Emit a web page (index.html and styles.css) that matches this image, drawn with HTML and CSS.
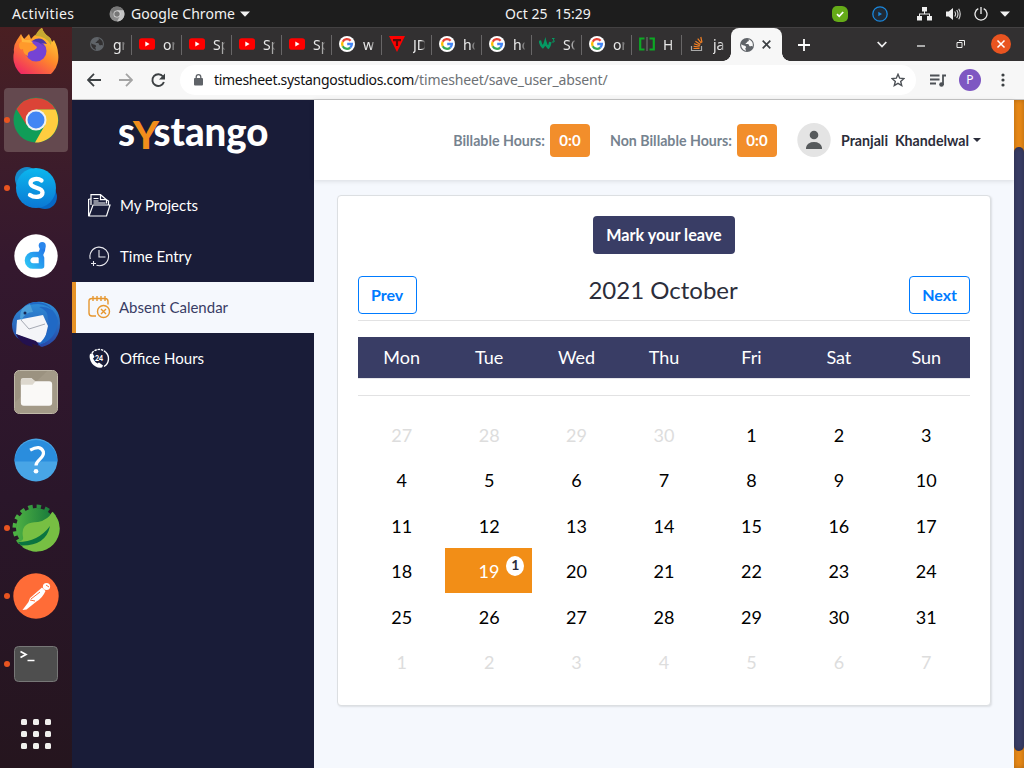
FILE: index.html
```html
<!DOCTYPE html>
<html lang="en">
<head>
<meta charset="utf-8">
<title>Timesheet</title>
<link rel="stylesheet" href="styles.css">
</head>
<body>
<svg width="0" height="0" class="defs">
  <defs>
    <linearGradient id="ff" x1="0.8" y1="0" x2="0.2" y2="1"><stop offset="0" stop-color="#ffd93b"/><stop offset=".45" stop-color="#ff8a2a"/><stop offset="1" stop-color="#ee1a6b"/></linearGradient>
    <linearGradient id="sk" x1="0" y1="0" x2="0" y2="1"><stop offset="0" stop-color="#0cb7ee"/><stop offset="1" stop-color="#0b78d4"/></linearGradient>
    <linearGradient id="tb" x1="0" y1="0" x2="0" y2="1"><stop offset="0" stop-color="#2e8fd9"/><stop offset="1" stop-color="#2746a5"/></linearGradient>
    <linearGradient id="sp" x1="0" y1="0" x2="1" y2="0"><stop offset="0" stop-color="#4db043"/><stop offset="1" stop-color="#12733a"/></linearGradient>
    <linearGradient id="dl" x1="0" y1="1" x2="1" y2="0"><stop offset="0" stop-color="#2cc1f4"/><stop offset="1" stop-color="#2277e8"/></linearGradient>
    <symbol id="google" viewBox="0 0 16 16"><circle cx="8" cy="8" r="8" fill="#fff"/><g fill="none" stroke-width="2.3"><path d="M11.6 4.7A4.9 4.9 0 0 0 3.7 5.7" stroke="#ea4335"/><path d="M3.7 5.7a4.9 4.9 0 0 0 0 4.6" stroke="#fbbc05"/><path d="M3.7 10.3a4.9 4.9 0 0 0 7.5 1.3" stroke="#34a853"/><path d="M11.2 11.6A4.900 4.900 0 0 0 12.900 8H8.200" stroke="#4285f4"/></g></symbol>
    <symbol id="youtube" viewBox="0 0 16 16"><rect y="2.300" width="16" height="11.400" rx="2.800" fill="#f00"/><path d="M6.300 5.500v5L10.600 8z" fill="#fff"/></symbol>
    <symbol id="globe" viewBox="0 0 16 16"><circle cx="8" cy="8" r="7" fill="currentColor"/><path d="M9.600 2.300c.8 1.500-.3 2.200-1.400 2.400-.2 1.300-1.600 1.100-1.600 2.300 1.800-.1 3.500-.2 3.500 1.300 0 1 .9 1.200 1.800.9.9-.3 1.400.1 1.800.4.800-3.300-.9-6.200-4.100-7.300zM2.200 7.200c1.600 1.500 3.600 1 4.700 2.300.8 1.100-.8 1.300-.6 2.300.1.900.9.900.7 1.900C4.200 13.300 2 10.600 2.200 7.200z" fill="var(--land)"/></symbol>
  </defs>
</svg>
<div class="screen">
  <header class="topbar">
    <div class="top-left">
      <span class="activities">Activities</span>
      <svg class="mini-chrome" viewBox="0 0 16 16"><circle cx="8" cy="8" r="7.500" fill="#8c8c8c"/><path d="M8 4.300h6.500A7.500 7.500 0 0 1 8 15.500L11.200 9.800z" fill="#c5c5c5"/><path d="M1.600 4A7.500 7.500 0 0 1 14.400 4H8L4.700 9.500z" fill="#777"/><circle cx="8" cy="8" r="3.500" fill="#ddd"/><circle cx="8" cy="8" r="2.700" fill="#777"/></svg>
      <span class="appname">Google Chrome</span>
      <svg class="caret" viewBox="0 0 10 6"><path d="M0 .5h10L5 5.800z" fill="#f2f2f2"/></svg>
    </div>
    <div class="clock">Oct 25&nbsp; 15:29</div>
    <div class="top-right">
      <svg width="16" height="16" viewBox="0 0 16 16"><path d="M5 0h5a6 6 0 0 1 6 6v5a5 5 0 0 1-5 5H6a6 6 0 0 1-6-6V5a5 5 0 0 1 5-5z" fill="#65ab18"/><path d="M5 8.200l2.200 2.100L11.200 6" fill="none" stroke="#fff" stroke-width="1.800"/></svg>
      <svg class="g24" width="16" height="16" viewBox="0 0 16 16"><circle cx="8" cy="8" r="7.200" fill="#1f2a36" stroke="#1b87dc" stroke-width="1.300"/><path d="M6.300 5.700v4.600L10 8z" fill="#1b87dc"/></svg>
      <svg class="g29" width="15" height="14" viewBox="0 0 15 14"><path d="M5 0h5v4.500H8V6.500h5V9h2v4.500h-5V9h2V7.500H3V9h2v4.500H0V9h2V6.500h5v-2H5z" fill="#eee"/></svg>
      <svg class="g14" width="15" height="14" viewBox="0 0 15 14"><path d="M0 4.500h2.700L7 1v12L2.700 9.500H0z" fill="#eee"/><path d="M8.700 4.500q1.800 2.500 0 5M10.700 3q2.600 4 0 8M12.700 1.700q3 5.300 0 10.600" fill="none" stroke="#ddd" stroke-width="1.100"/></svg>
      <svg class="g13" width="14" height="14" viewBox="0 0 14 14"><path d="M4.300 1.700a6 6 0 1 0 5.400 0M7 0v7" fill="none" stroke="#eee" stroke-width="1.300"/></svg>
      <svg class="g12" width="10" height="6" viewBox="0 0 10 6"><path d="M0 .5h10L5 5.800z" fill="#f2f2f2"/></svg>
    </div>
  </header>
  <div class="desktop">
    <nav class="dock">
      <div class="dock-item first"><svg width="46" height="46" viewBox="0 0 46 46"><path d="M4 12l4-6 3 5 5-5 2 5q3-4 6-5 2-5 5-6 2 6 7 9 2 1 3 5l2-2q4 8 4 13A22.500 22.500 0 1 1 1 24Q0 18 4 12z" fill="url(#ff)"/><path d="M22 8q3-6 7-8 2 6 7 9 3 2 2 8-5-9-16-9z" fill="#c8a932"/><circle cx="23" cy="23" r="10.500" fill="#7543d4"/><path d="M6 16q4-6 10-4l8 7q-1 3-6 4-4 1-3 5-5-2-5-7-4 2-4-5z" fill="#ff9a2b"/><path d="M8 8l4 4h5l3 3-11-1z" fill="#ffb53c"/><path d="M19 13q9-6 15 3l-6-1 4 4q-6-6-13-6z" fill="#4b37a7"/></svg></div>
      <div class="dock-item active running"><svg width="46" height="46" viewBox="0 0 46 46"><circle cx="23" cy="23" r="22.500" fill="#109d58"/><path d="M3.500 12A22.500 22.500 0 0 1 42.500 12.500H23L13.500 28z" fill="#db4437"/><path d="M23 12.500h19.500A22.500 22.500 0 0 1 22 45.500L32 28z" fill="#ffcd40"/><circle cx="23" cy="23" r="10.500" fill="#f1f1f1"/><circle cx="23" cy="23" r="8.500" fill="#4285f4"/></svg></div>
      <div class="dock-item running"><svg width="42" height="42" viewBox="0 0 42 42"><circle cx="12" cy="12" r="12" fill="#168bcb"/><circle cx="30" cy="30" r="12" fill="#0768c5"/><circle cx="21" cy="21" r="20" fill="url(#sk)"/><path d="M26.500 13.500C23 11 15.500 11.500 15.500 16c0 6 12 3.500 12 9.500 0 5-8 5.500-12.500 2.500" fill="none" stroke="#fff" stroke-width="4.300" stroke-linecap="round"/></svg></div>
      <div class="dock-item"><svg width="44" height="44" viewBox="0 0 44 44"><circle cx="22" cy="22" r="21.700" fill="#fff"/><path d="M27.500 20.500H20a6 6 0 0 0-6.500 6 5.500 5.500 0 0 0 6 5.500h8v-8q-2-3 0-6 1.500-2 1-6" fill="none" stroke="url(#dl)" stroke-width="5.600" stroke-linejoin="round"/><circle cx="28.200" cy="11.500" r="3.500" fill="#2a86ec"/></svg></div>
      <div class="dock-item"><svg width="48" height="48" viewBox="0 0 48 48"><path d="M8 10Q18 0 31 2q17 4 17 21 0 19-18 24l-5-2-9-3Q0 40 0 24q1-9 8-14z" fill="url(#tb)"/><path d="M5 20l26-5 5 11-4 17-9-1L4 34z" fill="#f4f5f8"/><path d="M9 20l8 9 16-5" fill="none" stroke="#a5a9b3"/><path d="M4 34l20 7 4 5-8-2 1 3Q8 45 4 34z" fill="#23114f"/><path d="M8 17q2-14 15-15 13 0 17 8-7-4-13-3 9 3 9 12 3 14-10 26 18-4 20-24-4-16-20-17Q9 4 8 17z" fill="#2069c5"/><path d="M8 18Q8 6 18 4l3 8q-8 0-11 8z" fill="#4b9ed8"/><circle cx="13" cy="13" r="1.500" fill="#162756"/></svg></div>
      <div class="dock-item"><svg width="44" height="44" viewBox="0 0 45 45"><rect x=".5" y=".5" width="44" height="44" rx="5" fill="#9b9280" stroke="#c4bcab"/><path d="M1 33L34 1h7q3 0 3 4v36q0 3-4 3H5q-4 0-4-4z" fill="#a39a88"/><path d="M7 11q0-2.500 2.500-2.500H18l3 3h15q3 0 3 3v19q0 3-3 3H10q-3 0-3-3z" fill="#faf9f7"/><path d="M7 15V11q0-2.500 2.500-2.500H18l4 3-3 3.500z" fill="#ddd8ce"/></svg></div>
      <div class="dock-item"><svg width="44" height="44" viewBox="0 0 45 45"><circle cx="22.500" cy="22.500" r="22" fill="#48a5e6"/><path d="M.5 24a22 22 0 1 1 44 0z" fill="#2a8ddd"/><path d="M16.500 12.500Q27 6.500 30 14c1.500 7-7.500 8-7.500 14" fill="none" stroke="#fff" stroke-width="3.300"/><circle cx="22.500" cy="34" r="2.400" fill="#fff"/></svg></div>
      <div class="dock-item running"><svg width="48" height="48" viewBox="0 0 48 48"><circle cx="24" cy="24" r="21.500" fill="none" stroke="url(#sp)" stroke-width="4" stroke-dasharray="4.500 3.940"/><circle cx="24" cy="24" r="20" fill="url(#sp)"/><path d="M40.300 7.700A23 23 0 0 1 9 41.500L6 38q6-1 5-5-3-15 15-15 10-2 14.300-10.300z" fill="#77bf43"/><path d="M6 38Q26 38 38 22 34 42 9 41.500z" fill="#0a7440"/></svg></div>
      <div class="dock-item running"><svg width="46" height="46" viewBox="0 0 46 46"><circle cx="23" cy="23" r="22.700" fill="#ff6c37"/><circle cx="33.500" cy="13.500" r="3.600" fill="#fff"/><path d="M29 14.500l3.500 3.500q-3 7-9 10.500l-10 8-4 .5 6-8 1.500-4z" fill="#fff"/><path d="M27 19l-9 7M17 27l5 1" stroke="#ff6c37" stroke-width="1"/><path d="M33 12l3 2" stroke="#ff6c37"/></svg></div>
      <div class="dock-item running"><svg width="44" height="36" viewBox="0 0 44 36"><rect x=".5" y=".5" width="43" height="35" rx="4" fill="#4e4e4e" stroke="#777"/><path d="M6.500 5.500l5.500 3-5.500 3" fill="none" stroke="#fff" stroke-width="1.700"/><path d="M13.500 14.500h7" stroke="#fff" stroke-width="1.500"/></svg></div>
      <div class="dock-item apps"><svg width="30" height="30" viewBox="0 0 30 30" fill="#f0efed"><rect width="6" height="6" rx="1.500"/><rect x="12" width="6" height="6" rx="1.500"/><rect x="24" width="6" height="6" rx="1.500"/><rect y="12" width="6" height="6" rx="1.500"/><rect x="12" y="12" width="6" height="6" rx="1.500"/><rect x="24" y="12" width="6" height="6" rx="1.500"/><rect y="24" width="6" height="6" rx="1.500"/><rect x="12" y="24" width="6" height="6" rx="1.500"/><rect x="24" y="24" width="6" height="6" rx="1.500"/></svg></div>
    </nav>
    <section class="browser">
      <div class="tabs">
        <div class="tab"><svg class="fav dim"><use href="#globe"/></svg><span>gr</span></div>
        <div class="tab"><svg class="fav"><use href="#youtube"/></svg><span>or</span></div>
        <div class="tab"><svg class="fav"><use href="#youtube"/></svg><span>Sp</span></div>
        <div class="tab"><svg class="fav"><use href="#youtube"/></svg><span>Sp</span></div>
        <div class="tab"><svg class="fav"><use href="#youtube"/></svg><span>Sp</span></div>
        <div class="tab"><svg class="fav"><use href="#google"/></svg><span>w</span></div>
        <div class="tab"><svg class="fav" viewBox="0 0 16 16"><path d="M0 0h16L8 16z" fill="#f00"/><path d="M4 3h8v2.300H9.100V10H6.900V5.300H4z" fill="#5a0a08"/></svg><span>JD</span></div>
        <div class="tab"><svg class="fav"><use href="#google"/></svg><span>ho</span></div>
        <div class="tab"><svg class="fav"><use href="#google"/></svg><span>ho</span></div>
        <div class="tab"><svg class="fav" viewBox="0 0 16 16"><path d="M.8 4.500q1 5 3 6.500 1.500-1.500 2.500-5 1 4 3 5.500 1.500-2 2-5.500" fill="none" stroke="#059862" stroke-width="2.600"/><path d="M13 2.500h2.300L14 4q2 .3 1 2h-2" fill="none" stroke="#059862"/></svg><span>SQ</span></div>
        <div class="tab"><svg class="fav"><use href="#google"/></svg><span>or</span></div>
        <div class="tab"><svg class="fav" viewBox="0 0 16 16"><path d="M5.500 2.500H1.200v11h4.300M10.500 2.500h4.300v11h-4.300" fill="none" stroke="#0da825" stroke-width="2.200"/><path d="M8 1v14" stroke="#555" stroke-width="2"/></svg><span>H</span></div>
        <div class="tab last"><svg class="fav" viewBox="0 0 16 16"><path d="M2.500 10v4.500h10V10" fill="none" stroke="#aaa" stroke-width="1.200"/><path d="M4.500 12.500h6M4.600 10.300l6 .7M5 7.800l5.800 1.800M6.400 5.200l5 3.300M8.700 2.600l3.600 4.600M11.800 1l1.200 5.500" stroke="#f48024" stroke-width="1.200"/></svg><span>ja</span></div>
        <div class="tab-active"><svg class="fav"><use href="#globe"/></svg><svg width="9" height="9" viewBox="0 0 9 9"><path d="M.7.7l7.600 7.600M8.300.7L.7 8.300" stroke="#3c4043" stroke-width="1.700"/></svg></div>
        <svg class="plus" width="12" height="12" viewBox="0 0 12 12"><path d="M6 0v12M0 6h12" stroke="#fff" stroke-width="1.800"/></svg>
        <div class="wincontrols">
          <svg width="10" height="7" viewBox="0 0 10 7"><path d="M.7 1L5 5.500 9.300 1" fill="none" stroke="#eee" stroke-width="1.800"/></svg>
          <svg class="w-min" width="8" height="2"><path d="M0 1h8" stroke="#eee" stroke-width="1.300"/></svg>
          <svg class="w-max" width="9" height="8" viewBox="0 0 9 8"><path d="M1 2.500h5V7.500H1zM3 .5h5.500v5" fill="none" stroke="#eee" stroke-width="1"/></svg>
          <svg class="w-close" width="20" height="20" viewBox="0 0 20 20"><circle cx="10" cy="10" r="10" fill="#e95420"/><path d="M6.500 6.500l7 7M13.500 6.500l-7 7" stroke="#fff" stroke-width="1.500"/></svg>
        </div>
      </div>
      <div class="toolbar">
        <svg width="14" height="14" viewBox="0 0 14 14" fill="none" stroke="#3c4043" stroke-width="1.800"><path d="M14 7H1M7 .8L.9 7 7 13.200"/></svg>
        <svg class="g18" width="14" height="14" viewBox="0 0 14 14" fill="none" stroke="#a4a4a4" stroke-width="1.800"><path d="M0 7h13M7 .8L13.100 7 7 13.200"/></svg>
        <svg class="g18" width="15" height="15" viewBox="0 0 15 15"><path d="M12 3.500A5.900 5.900 0 1 0 12.900 9" fill="none" stroke="#3c4043" stroke-width="1.900"/><path d="M14 .6v6H8z" fill="#3c4043"/></svg>
        <div class="omnibox">
          <svg width="9" height="12" viewBox="0 0 9 12"><rect y="4" width="9" height="7.600" rx="1" fill="#5f6368"/><path d="M2.200 5V3a2.300 2.300 0 0 1 4.600 0v2" fill="none" stroke="#5f6368" stroke-width="1.300"/></svg>
          <span class="url"><b>timesheet.systangostudios.com</b><i>/timesheet/save_user_absent/</i></span>
          <svg class="star" width="14" height="14" viewBox="0 0 14 14"><path d="M7 1.300l1.700 3.900 4.200.4-3.200 2.800 1 4.100L7 10.300l-3.700 2.200 1-4.100L1.100 5.600l4.200-.4z" fill="none" stroke="#4d5156" stroke-width="1.400"/></svg>
        </div>
        <svg class="queue" width="16" height="13" viewBox="0 0 16 13"><path d="M0 1.500h9.500M0 5.500h9.500M0 9.500h6M13 11V1.500h3" fill="none" stroke="#4d5156" stroke-width="1.800"/><circle cx="11.500" cy="10.500" r="2.300" fill="#4d5156"/></svg>
        <span class="profile">P</span>
        <svg class="dots" width="4" height="14" fill="#3c4043"><circle cx="2" cy="2" r="1.600"/><circle cx="2" cy="7" r="1.600"/><circle cx="2" cy="12" r="1.600"/></svg>
      </div>
      <div class="page">
        <aside class="sidebar">
          <div class="logo"><svg width="152" height="46" viewBox="0 0 152 46"><text y="27" class="logo-text"><tspan x="-1" textLength="17" lengthAdjust="spacingAndGlyphs">s</tspan><tspan x="34.500" textLength="115" lengthAdjust="spacingAndGlyphs">stango</tspan></text><text x="14" y="29.500" class="logo-y" textLength="26" lengthAdjust="spacingAndGlyphs">Y</text></svg></div>
          <a class="nav"><svg width="23" height="23" viewBox="0 0 23 23" fill="none" stroke="#fff" stroke-width="1.200"><path d="M.6 22V5.500l3-1M3 11V.7h9.500l6 5V9.500M1 22l4-11h17L18.500 22z"/><path d="M12.500.7v5h6M5.500 4.500h5M5.500 7h5M5.500 9h12M19 6l1.500 1v4"/></svg><span>My Projects</span></a>
          <a class="nav"><svg width="23" height="23" viewBox="0 0 23 23" fill="none" stroke="#e9e9ef" stroke-width="1.100"><path d="M2.300 14A9.300 9.300 0 1 1 8.500 20.300M11 5v7h6.500M5.500 16v5M3 18.500h5"/></svg><span>Time Entry</span></a>
          <a class="nav selected"><svg width="23" height="23" viewBox="0 0 23 23" fill="none" stroke="#e69730" stroke-width="1.400"><path d="M8 20H4Q1 20 1 17V5Q1 2.500 4 2.500h13q3 0 3 3v3M5 0v5M9 0v5M13 0v5M17 0v5"/><circle cx="15.500" cy="15.500" r="6"/><path d="M13 13l5 5M18 13l-5 5"/></svg><span>Absent Calendar</span></a>
          <a class="nav"><svg width="23" height="23" viewBox="0 0 23 23"><path d="M4 6A9 9 0 0 1 17.500 5" fill="none" stroke="#fff" stroke-width="1.400" stroke-dasharray="2.500 .8"/><path d="M17.500 5a9 9 0 0 1-1.500 14.500" fill="none" stroke="#fff" stroke-width="1.400"/><path d="M2 7l2.500-1 2 4-1.500 1.500Q7 15.500 9.500 16.500l1.500-1 4 3-1 2Q8 21.500 4 16.500 .5 11 2 7z" fill="#fff"/><text x="7" y="13.500" class="icon24">24</text></svg><span>Office Hours</span></a>
        </aside>
        <div class="content">
          <header class="header">
            <span class="label">Billable Hours:</span><span class="hours">0:0</span>
            <span class="label second">Non Billable Hours:</span><span class="hours">0:0</span>
            <svg class="avatar" width="34" height="34" viewBox="0 0 34 34"><ellipse cx="17" cy="17" rx="16.700" ry="17" fill="#e4e4e4"/><circle cx="17" cy="12" r="4.300" fill="#565a5c"/><path d="M9 26v-1.500q1.500-5.500 8-5.500t8 5.500V26z" fill="#565a5c"/></svg>
            <span class="user">Pranjali&nbsp; Khandelwal</span>
            <svg class="user-caret" width="8" height="4"><path d="M0 0h8L4 4z" fill="#2b2d3a"/></svg>
          </header>
          <main class="card">
            <div class="mark">Mark your leave</div>
            <div class="month"><span class="step">Prev</span><h1>2021 October</h1><span class="step">Next</span></div>
            <div class="weekdays"><span>Mon</span><span>Tue</span><span>Wed</span><span>Thu</span><span>Fri</span><span>Sat</span><span>Sun</span></div>
            <div class="days">
              <span class="out">27</span><span class="out">28</span><span class="out">29</span><span class="out">30</span><span>1</span><span>2</span><span>3</span>
              <span>4</span><span>5</span><span>6</span><span>7</span><span>8</span><span>9</span><span>10</span>
              <span>11</span><span>12</span><span>13</span><span>14</span><span>15</span><span>16</span><span>17</span>
              <span>18</span><span class="leave">19<b class="badge">1</b></span><span>20</span><span>21</span><span>22</span><span>23</span><span>24</span>
              <span>25</span><span>26</span><span>27</span><span>28</span><span>29</span><span>30</span><span>31</span>
              <span class="out">1</span><span class="out">2</span><span class="out">3</span><span class="out">4</span><span class="out">5</span><span class="out">6</span><span class="out">7</span>
            </div>
          </main>
        </div>
        <div class="scrollbar"><div class="thumb"></div></div>
      </div>
    </section>
  </div>
</div>
</body>
</html>
```
FILE: styles.css
```css
* { box-sizing: border-box; }
body { margin: 0; font-family: "Noto Sans", sans-serif; }
svg { display: block; flex: none; }
.defs { position: absolute; }
.screen { width: 1024px; height: 768px; overflow: hidden; display: flex; flex-direction: column; }

.topbar { height: 27px; background: #1d1d1d; color: #f2f2f2; font-size: 14px; display: grid; grid-template-columns: 504px 88px 1fr; align-items: center; line-height: 26px; white-space: nowrap; }
.top-left { display: flex; align-items: center; padding-left: 12px; }
.activities { width: 97px; letter-spacing: .4px; }
.mini-chrome { width: 16px; height: 16px; }
.appname { margin-left: 6px; width: 104px; letter-spacing: .05px; }
.caret { width: 10px; height: 6px; margin-left: 5px; }
.clock { text-align: center; letter-spacing: .03px; }
.top-right { display: flex; align-items: center; justify-content: flex-end; padding-right: 14px; }
.g24 { margin-left: 24px; }
.g29 { margin-left: 29px; }
.g14 { margin-left: 14px; }
.g13 { margin-left: 13px; }
.g12 { margin-left: 12px; }

.desktop { display: flex; flex: 1; min-height: 0; }
.dock { width: 72px; background: linear-gradient(#4a1f22 0, #401e29 90px, #34182e 240px, #2a162a 470px, #25151e 741px); display: flex; flex-direction: column; align-items: center; gap: 4px; }
.dock-item { width: 64px; height: 64px; flex: none; display: flex; align-items: center; justify-content: center; border-radius: 4px; }
.dock-item.first { height: 57px; padding-bottom: 9px; }
.dock-item.active { background: #64494f; }
.dock-item.apps { padding-top: 4px; }
.running { position: relative; }
.running::before { content: ""; position: absolute; left: 0; width: 6px; height: 6px; border-radius: 50%; background: #e95420; }

.browser { flex: 1; display: flex; flex-direction: column; min-width: 0; }
.tabs { height: 34px; background: #323031; border-top: 1px solid #434142; padding-left: 10px; display: flex; align-items: stretch; color: #e8e8e8; }
.tab { width: 50px; flex: none; padding: 0 0 1px 7px; display: flex; align-items: center; background: linear-gradient(#686667, #686667) right center / 1px 20px no-repeat; }
.tab.last { background: none; }
.tab span { margin-left: 8px; width: 12px; overflow: hidden; font-size: 14px; white-space: nowrap; -webkit-mask-image: linear-gradient(90deg, #000 65%, transparent 105%); }
.fav { width: 16px; height: 16px; color: #5f6368; --land: #f7f7f7; }
.fav.dim { --land: #323031; }
.tab-active { margin-left: -1px; width: 51px; background: #f7f7f7; border-radius: 8px 8px 0 0; display: flex; align-items: center; padding-left: 8px; gap: 7px; position: relative; }
.tab-active::before, .tab-active::after { content: ""; position: absolute; bottom: 0; width: 8px; height: 8px; background: radial-gradient(circle at 0 0, transparent 7.5px, #f7f7f7 8px); left: -8px; }
.tab-active::after { left: auto; right: -8px; background: radial-gradient(circle at 100% 0, transparent 7.5px, #f7f7f7 8px); }
.plus { align-self: center; margin-left: 16px; }
.wincontrols { margin-left: auto; padding: 0 13px 1px 0; display: flex; align-items: center; }
.w-min { margin: 4px 0 0 30px; }
.w-max { margin-left: 31px; }
.w-close { margin-left: 26px; }

.toolbar { height: 39px; background: #f7f7f7; border-bottom: 1px solid #c6c6c6; display: flex; align-items: center; padding-left: 15px; }
.g18 { margin-left: 18px; }
.omnibox { margin-left: 14px; width: 736px; height: 30px; border-radius: 15px; background: #fff; display: flex; align-items: center; padding-left: 14px; }
.url { font-size: 14px; margin-left: 11px; padding-bottom: 1px; white-space: nowrap; letter-spacing: -.3px; color: #111; }
.url b, .url i { font-weight: 400; font-style: normal; }
.url i { color: #6d7175; letter-spacing: -.13px; }
.star { margin: 0 11px 0 auto; }
.queue { margin-left: 14px; }
.profile { width: 22px; height: 22px; margin-left: 13px; border-radius: 50%; background: #7e57c2; color: #fff; font-size: 12px; line-height: 22px; text-align: center; }
.dots { margin-left: 20px; }

.page { flex: 1; display: flex; font-family: Lato, sans-serif; background: #f5f8fd; min-height: 0; }
.sidebar { width: 242px; background: #191c38; color: #fff; }
.logo { height: 80px; padding: 19px 0 0 47px; }
.logo-text { font: 900 39px Lato, sans-serif; fill: #fff; }
.logo-y { font: 900 37px Lato, sans-serif; fill: #f28e1c; }
.nav { height: 51px; display: flex; align-items: center; padding-left: 16px; font-size: 15px; }
.nav span { margin-left: 9px; padding-bottom: 1px; }
.nav.selected { background: #f5f8fd; color: #393d65; border-left: 4px solid #e69226; padding-left: 12px; }
.nav.selected span { margin-left: 8px; }
.icon24 { font: 900 7px Lato, sans-serif; fill: #fff; }

.content { width: 700px; }
.header { height: 80px; background: #fff; box-shadow: 0 1px 5px rgba(0,0,0,.12); display: flex; align-items: center; justify-content: flex-end; padding-right: 33px; white-space: nowrap; }
.label { color: #76838f; font-weight: 700; font-size: 14.200px; }
.label.second { margin-left: 20px; }
.hours { width: 40px; height: 33px; border-radius: 4px; background: #f28e2b; color: #fff; font-weight: 700; font-size: 15px; line-height: 33px; text-align: center; margin-left: 5px; }
.avatar { margin-left: 20px; }
.user { margin-left: 10px; font-weight: 700; font-size: 14.200px; color: #2b2d3a; }
.user-caret { margin-left: 4px; }

.card { margin: 15px 23px 0; height: 511px; background: #fff; border: 1px solid #dcdfe2; border-radius: 4px; box-shadow: 1px 1px 2px rgba(0,0,0,.1); padding: 20px; }
.mark { width: 142px; height: 38px; margin: 0 auto; background: #393d65; color: #fff; border-radius: 4px; font-size: 16.200px; font-weight: 700; line-height: 38px; text-align: center; }
.month { display: flex; justify-content: space-between; margin-top: 22px; height: 45px; border-bottom: 1px solid #e2e2e3; }
.month h1 { margin: 0; font-weight: 400; font-size: 24px; line-height: 28px; color: #2b2d3a; }
.step { height: 38px; min-width: 59px; border: 1px solid #007bff; color: #007bff; border-radius: 4px; padding: 0 12px; font-size: 16px; font-weight: 700; line-height: 36px; }
.weekdays, .days { display: grid; grid-template-columns: repeat(7, 1fr); text-align: center; font-size: 18px; }
.weekdays { margin-top: 16px; height: 41px; line-height: 41px; background: #393d65; color: #fff; box-shadow: 0 1px 0 #e6e6ea; }
.days { margin-top: 17px; border-top: 1px solid #e2e2e3; padding-top: 16px; grid-auto-rows: 45.430px; line-height: 47px; color: #000; }
.out { color: #ddd; }
.leave { background: #f28e17; color: #fff; position: relative; width: 87px; height: 45px; }
.badge { position: absolute; top: 8px; right: 8px; width: 18px; height: 20px; border-radius: 50%; background: #fff; color: #2b2d3a; font-size: 14px; line-height: 18px; }

.scrollbar { width: 10px; background: #e88917; box-shadow: inset 0 0 5px rgba(0,0,0,.25); padding-top: 47px; }
.thumb { height: 604px; border-radius: 5px; background: #393d65; box-shadow: inset 0 0 5px rgba(0,0,0,.25); }
```
